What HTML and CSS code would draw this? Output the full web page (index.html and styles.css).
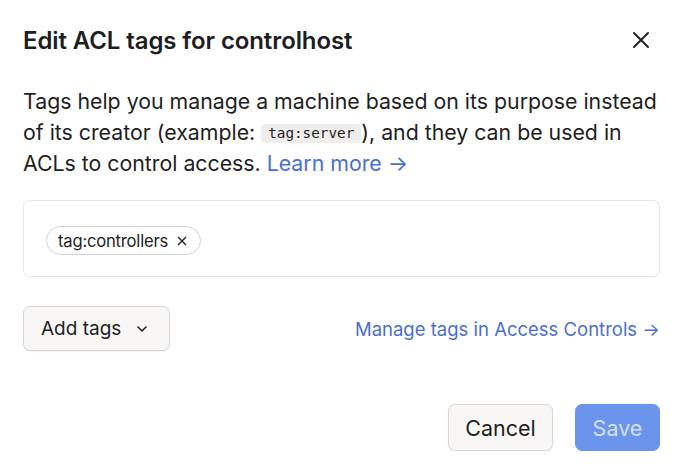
FILE: index.html
```html
<!DOCTYPE html>
<html>
<head>
<meta charset="utf-8">
<link rel="stylesheet" href="styles.css">
</head>
<body>
<div class="dialog">
  <div class="header">
    <h1 class="title">Edit ACL tags for controlhost</h1>
    <button class="close" aria-label="Close">
      <svg width="18" height="18" viewBox="0 0 18 18"><path d="M2 2L16 16M16 2L2 16" stroke="#222" stroke-width="2" stroke-linecap="round"/></svg>
    </button>
  </div>
  <p class="desc">Tags help you manage a machine based on its purpose instead of its creator (example: <code class="code">tag:server</code>), and they can be used in ACLs to control access. <a class="link" href="#">Learn more →</a></p>
  <div class="tagbox">
    <span class="chip">tag:controllers
      <svg width="10" height="10" viewBox="0 0 10 10"><path d="M1 1L9 9M9 1L1 9" stroke="#222" stroke-width="1.4"/></svg>
    </span>
  </div>
  <div class="row">
    <button class="btn add">Add tags
      <svg width="12" height="12" viewBox="0 0 12 12"><path d="M2 4L6 8L10 4" fill="none" stroke="#222" stroke-width="1.6" stroke-linecap="round" stroke-linejoin="round"/></svg>
    </button>
    <a class="link manage" href="#">Manage tags in Access Controls →</a>
  </div>
  <div class="footer">
    <button class="btn cancel">Cancel</button>
    <button class="btn save">Save</button>
  </div>
</div>
</body>
</html>
```
FILE: styles.css
```css
* { box-sizing: border-box; }
body {
  margin: 0;
  background: #fff;
  font-family: Inter, "Noto Sans", sans-serif;
  color: #1f1e1e;
}
.dialog {
  width: 686px;
  padding: 24px 26px 0 23px;
}
.header {
  display: flex;
  justify-content: space-between;
  align-items: center;
  height: 32px;
}
.title {
  margin: 0;
  font-size: 24px;
  font-weight: 600;
  letter-spacing: -0.1px;
}
.close {
  border: 0;
  background: none;
  padding: 0;
  width: 18px;
  height: 18px;
  margin-right: 10px;
  display: flex;
}
.desc {
  margin: 30px 0 0;
  font-size: 21.3px;
  line-height: 31px;
}
.code {
  display: inline-block;
  font-family: "DejaVu Sans Mono", monospace;
  font-size: 14.3px;
  line-height: 19px;
  background: #efeeed;
  border-radius: 4px;
  padding: 0 7px;
  vertical-align: 2px;
}
.link {
  color: #4a6fd0;
  text-decoration: none;
}
.tagbox {
  margin-top: 21px;
  height: 77px;
  border: 1px solid #e6e5e4;
  border-radius: 7px;
  padding: 25px 22px;
}
.chip {
  display: inline-flex;
  align-items: center;
  gap: 9px;
  height: 29px;
  padding: 0 13px 0 11px;
  border: 1px solid #d4d3d2;
  border-radius: 15px;
  font-size: 16.6px;
  letter-spacing: -0.2px;
}
.row {
  margin-top: 29px;
  display: flex;
  justify-content: space-between;
  align-items: center;
}
.btn {
  font-family: inherit;
  border-radius: 7px;
  cursor: pointer;
}
.add {
  display: flex;
  align-items: center;
  gap: 15px;
  height: 45px;
  padding: 0 21px 0 17px;
  background: #f8f7f6;
  border: 1px solid #d9d8d7;
  font-size: 19px;
  color: #1f1e1e;
  box-shadow: 0 1px 2px rgba(0,0,0,0.06);
}
.manage {
  font-size: 18.5px;
}
.footer {
  margin-top: 53px;
  display: flex;
  justify-content: flex-end;
  gap: 22px;
}
.cancel {
  height: 47px;
  width: 105px;
  background: #f8f7f6;
  border: 1px solid #d9d8d7;
  font-size: 21.5px;
  color: #1f1e1e;
  box-shadow: 0 1px 2px rgba(0,0,0,0.06);
}
.save {
  height: 47px;
  width: 85px;
  background: #6b95ec;
  border: 1px solid #6b95ec;
  font-size: 21.5px;
  color: #d3e0fb;
}
```
